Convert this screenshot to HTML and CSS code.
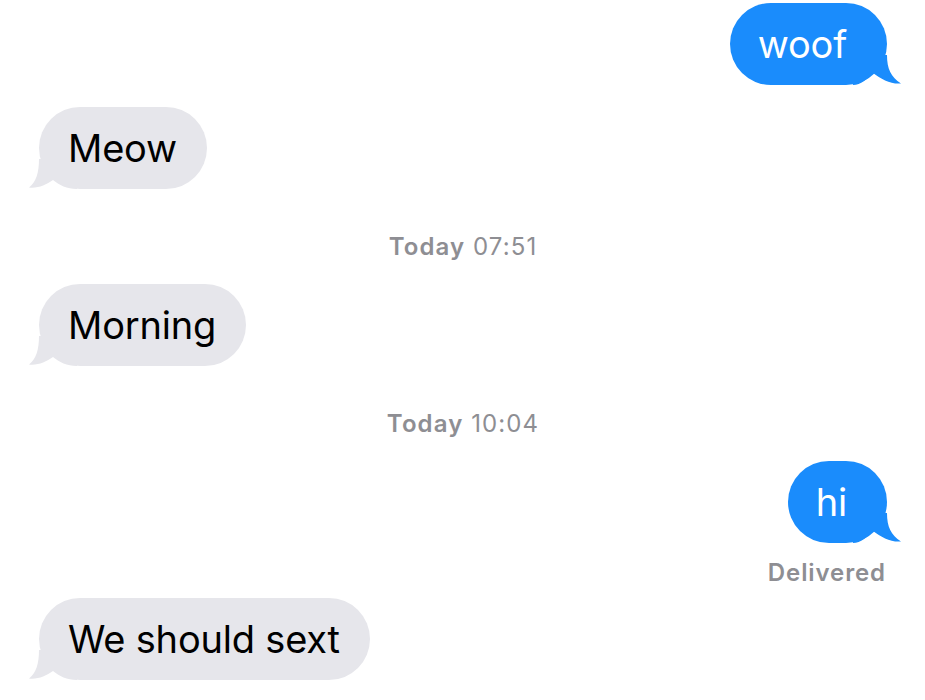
FILE: index.html
```html
<!DOCTYPE html>
<html lang="en">
<head>
<meta charset="utf-8">
<title>Messages</title>
<link rel="stylesheet" href="styles.css">
</head>
<body>
<div class="chat">
  <div class="row out first"><div class="bubble sent">woof</div></div>
  <div class="row in gap-s"><div class="bubble recv">Meow</div></div>
  <div class="stamp"><span class="day">Today</span> 07:51</div>
  <div class="row in gap-s"><div class="bubble recv">Morning</div></div>
  <div class="stamp"><span class="day">Today</span> 10:04</div>
  <div class="row out gap-s"><div class="bubble sent">hi</div></div>
  <div class="status">Delivered</div>
  <div class="row in gap-d"><div class="bubble recv">We should sext</div></div>
</div>
</body>
</html>
```

FILE: styles.css
```css
html, body {
  margin: 0;
  padding: 0;
  background: #ffffff;
}

body {
  font-family: "Inter", "Liberation Sans", "Helvetica Neue", Arial, sans-serif;
  width: 925px;
  height: 700px;
  overflow: hidden;
}

.chat {
  display: flex;
  flex-direction: column;
  padding: 3px 38px 0 39px;
}

.row {
  display: flex;
}

.row.out {
  justify-content: flex-end;
}

.row.in {
  justify-content: flex-start;
}

.gap-s {
  margin-top: 22px;
}

.gap-d {
  margin-top: 11px;
}

.bubble {
  position: relative;
  z-index: 0;
  font-size: 38px;
  line-height: 48px;
  height: 82px;
  box-sizing: border-box;
  padding-top: 17px;
  border-radius: 41px;
  letter-spacing: -0.2px;
}

.bubble::before {
  content: "";
  position: absolute;
  bottom: 0;
  width: 48px;
  height: 30px;
  z-index: -1;
}

.sent {
  background: #1a8cfc;
  color: #ffffff;
  padding-left: 28px;
  padding-right: 40px;
}

.sent::before {
  right: -14px;
  background: #1a8cfc;
  clip-path: path("M 34 0 C 34 14, 38 22, 48 28.5 C 38 29.5, 28 24, 20 18 C 14 24, 8 30, 0 30 L 0 0 Z");
}

.recv {
  background: #e6e6eb;
  color: #000000;
  padding-left: 29px;
  padding-right: 30px;
}

.recv::before {
  left: -10px;
  background: #e6e6eb;
  clip-path: path("M 10 0 C 10 14, 7 23, 0 28.5 C 9 29.5, 17 26, 24 21 C 30 26, 38 30, 48 30 L 48 0 Z");
}

.stamp {
  margin-top: 43px;
  text-align: center;
  font-size: 24px;
  line-height: 30px;
  letter-spacing: 1.1px;
  color: #8e8e93;
  font-weight: 400;
}

.stamp .day {
  font-weight: 600;
}

.status {
  margin-top: 16px;
  align-self: flex-end;
  margin-right: 1px;
  font-size: 24px;
  line-height: 28px;
  letter-spacing: 0.9px;
  font-weight: 600;
  color: #8e8e93;
}
```
